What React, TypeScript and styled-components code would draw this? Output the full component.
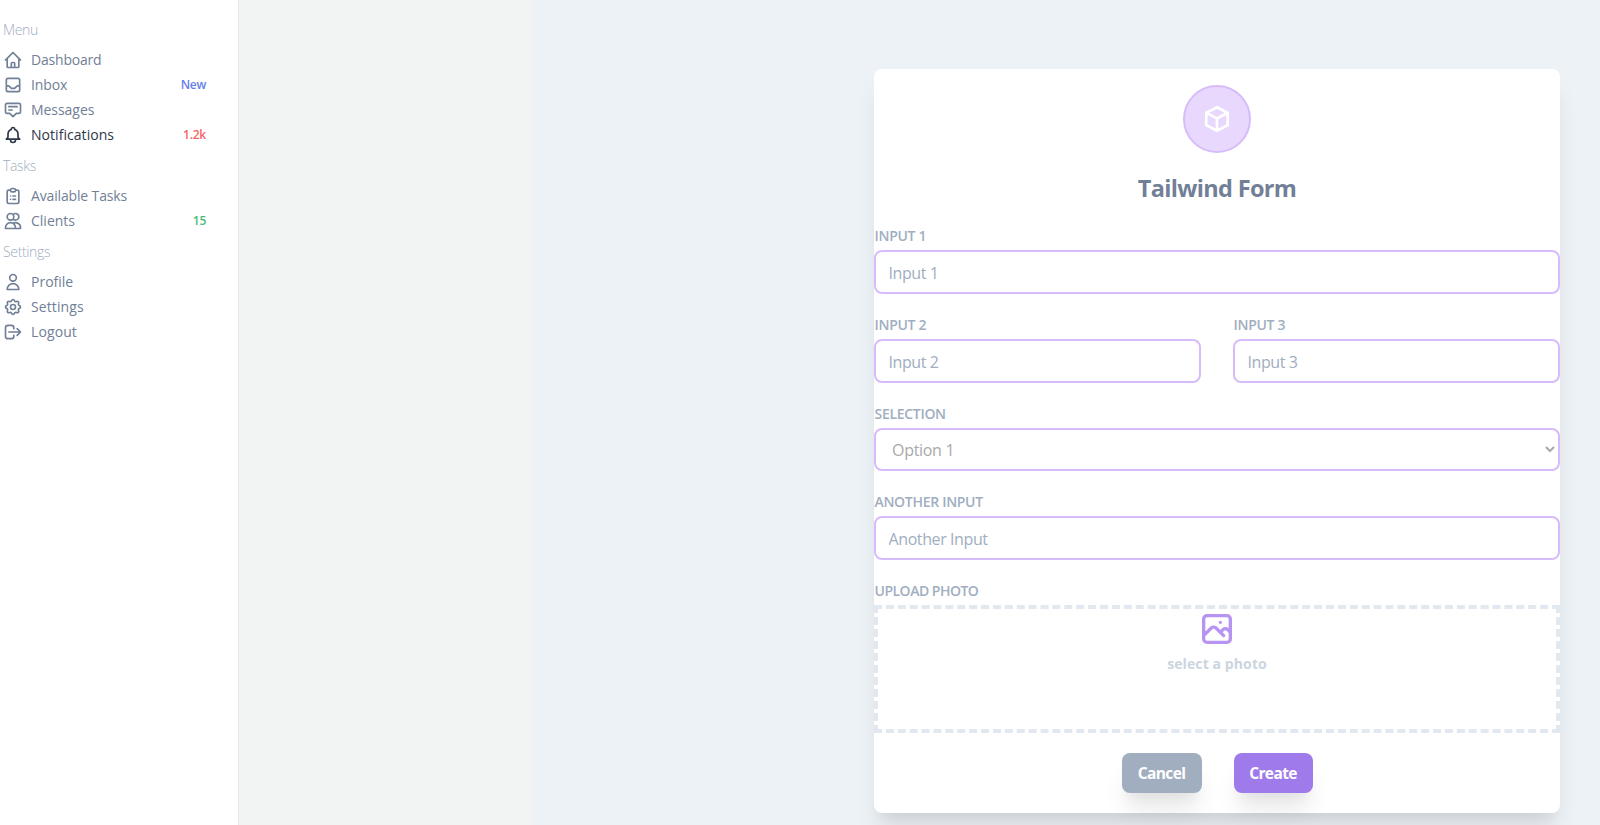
import React from "react";
import styled, { createGlobalStyle } from "styled-components";

const Global = createGlobalStyle`
  *, *::before, *::after { box-sizing: border-box; }
  body { margin: 0; overflow: hidden; font-family: "Open Sans", "Noto Sans", sans-serif; background: #fff; }
  h1, p { margin: 0; }
`;

const Page = styled.div`
  display: flex;
  height: 825px;
  overflow: hidden;
`;

const Sidebar = styled.aside`
  flex: 0 0 239px;
  padding: 18px 32px 0 3px;
  border-right: 1px solid #e2e8f0;
  background: #fff;
`;

const Group = styled.section`
  margin-bottom: 7px;
`;

const GroupTitle = styled.div`
  height: 24px;
  margin-bottom: 5px;
  line-height: 24px;
  font-size: 14px;
  font-weight: 300;
  letter-spacing: -0.35px;
  color: #a0aec0;
`;

const NavItem = styled.a<{ $active?: boolean; $tracking?: number }>`
  display: flex;
  align-items: center;
  height: 25px;
  color: ${(p) => (p.$active ? "#2d3748" : "#718096")};
  font-size: 14px;
  letter-spacing: ${(p) => p.$tracking ?? 0}px;

  svg { width: 20px; height: 20px; margin: 1px 8px 0 0; }
`;

const Badge = styled.span<{ $color: string }>`
  margin-left: auto;
  font-size: 12px;
  font-weight: 600;
  letter-spacing: -0.25px;
  color: ${(p) => p.$color};
`;

const Gutter = styled.div`
  flex: 0 0 293px;
  background: #f1f4f3;
`;

const Content = styled.main`
  flex: 1;
  display: flex;
  justify-content: flex-end;
  align-items: flex-start;
  padding: 69px 40px 0 0;
  background: #edf2f7;
`;

const Card = styled.form`
  width: 686px;
  height: 744px;
  padding-top: 16px;
  display: flex;
  flex-direction: column;
  background: #fff;
  border-radius: 8px;
  box-shadow: 0 20px 25px -5px rgba(0, 0, 0, 0.1), 0 10px 10px -5px rgba(0, 0, 0, 0.04);
`;

const Emblem = styled.div`
  align-self: center;
  display: flex;
  align-items: center;
  justify-content: center;
  width: 68px;
  height: 68px;
  border: 2px solid #d6bcfa;
  border-radius: 50%;
  background: #e9d8fd;
  color: #fff;
`;

const Title = styled.h1`
  margin-top: 17px;
  height: 35px;
  line-height: 36px;
  text-align: center;
  font-size: 23.5px;
  font-weight: 700;
  letter-spacing: -0.65px;
  color: #718096;
`;

const Row = styled.div`
  display: grid;
  grid-auto-flow: column;
  grid-auto-columns: 1fr;
  gap: 32px;
  margin-top: 20px;
`;

const Field = styled.label`
  display: flex;
  flex-direction: column;
`;

const FieldLabel = styled.span<{ $tight?: boolean }>`
  height: 25px;
  padding: 0 0 4px 0.5px;
  line-height: 21px;
  font-size: 14px;
  font-weight: 600;
  letter-spacing: ${(p) => (p.$tight ? -0.5 : -0.3)}px;
  text-transform: uppercase;
  color: #a0aec0;
`;

const Input = styled.input`
  width: 100%;
  height: 44px;
  padding: 9px 12px 8px 12.5px;
  border: 2px solid #d6bcfa;
  border-radius: 8px;
  outline: none;
  background: #fff;
  font: 16px "Open Sans", "Noto Sans", sans-serif;
  letter-spacing: -0.4px;

  &::placeholder { color: #a0aec0; opacity: 1; }
`;

const Select = styled.select`
  width: 100%;
  height: 43px;
  padding: 8px 12px;
  border: 2px solid #d6bcfa;
  border-radius: 8px;
  background: #fff;
  color: #a9a9a9;
  font: 16px "Open Sans", "Noto Sans", sans-serif;
  letter-spacing: -0.3px;
`;

const DropZone = styled.div`
  display: flex;
  flex-direction: column;
  align-items: center;
  height: 128px;
  border: 4px dashed #e2e8f0;
  color: #b794f4;

  svg { width: 40px; height: 40px; }
`;

const DropHint = styled.p`
  padding-top: 4px;
  line-height: 21px;
  font-size: 14px;
  font-weight: 700;
  letter-spacing: 0.1px;
  color: #cbd5e0;
`;

const Actions = styled.div`
  display: flex;
  justify-content: center;
  gap: 32px;
  margin-top: 20px;
`;

const Button = styled.button<{ $bg: string; $width: number }>`
  width: ${(p) => p.$width}px;
  height: 40px;
  padding: 0;
  border: 0;
  border-radius: 8px;
  background: ${(p) => p.$bg};
  color: #fff;
  font: 700 15.5px "Open Sans", "Noto Sans", sans-serif;
  letter-spacing: -0.6px;
  box-shadow: 0 20px 25px -5px rgba(0, 0, 0, 0.1), 0 10px 10px -5px rgba(0, 0, 0, 0.04);
`;

const Icon = ({ d }: { d: string }) => (
  <svg viewBox="0 0 24 24" fill="none" stroke="currentColor" strokeWidth="2" strokeLinecap="round" strokeLinejoin="round">
    <path d={d} />
  </svg>
);

const icons = {
  home: "M3 12l2-2m0 0l7-7 7 7M5 10v10a1 1 0 001 1h3m10-11l2 2m-2-2v10a1 1 0 01-1 1h-3m-6 0a1 1 0 001-1v-4a1 1 0 011-1h2a1 1 0 011 1v4a1 1 0 001 1m-6 0h6",
  inbox: "M20 13V6a2 2 0 00-2-2H6a2 2 0 00-2 2v7m16 0v5a2 2 0 01-2 2H6a2 2 0 01-2-2v-5m16 0h-2.586a1 1 0 00-.707.293l-2.414 2.414a1 1 0 01-.707.293h-3.172a1 1 0 01-.707-.293l-2.414-2.414A1 1 0 006.586 13H4",
  message: "M7 8h10M7 12h4m1 8l-4-4H5a2 2 0 01-2-2V6a2 2 0 012-2h14a2 2 0 012 2v8a2 2 0 01-2 2h-3l-4 4z",
  bell: "M15 17h5l-1.405-1.405A2.032 2.032 0 0118 14.158V11a6.002 6.002 0 00-4-5.659V5a2 2 0 10-4 0v.341C7.67 6.165 6 8.388 6 11v3.159c0 .538-.214 1.055-.595 1.436L4 17h5m6 0v1a3 3 0 11-6 0v-1m6 0H9",
  tasks: "M9 5H7a2 2 0 00-2 2v12a2 2 0 002 2h10a2 2 0 002-2V7a2 2 0 00-2-2h-2M9 5a2 2 0 002 2h2a2 2 0 002-2M9 5a2 2 0 012-2h2a2 2 0 012 2m-3 7h3m-3 4h3m-6-4h.01M9 16h.01",
  users: "M12 4.354a4 4 0 110 5.292M15 21H3v-1a6 6 0 0112 0v1zm0 0h6v-1a6 6 0 00-9-5.197M13 7a4 4 0 11-8 0 4 4 0 018 0z",
  user: "M16 7a4 4 0 11-8 0 4 4 0 018 0zM12 14a7 7 0 00-7 7h14a7 7 0 00-7-7z",
  gear: "M10.325 4.317c.426-1.756 2.924-1.756 3.35 0a1.724 1.724 0 002.573 1.066c1.543-.94 3.31.826 2.37 2.37a1.724 1.724 0 001.065 2.572c1.756.426 1.756 2.924 0 3.35a1.724 1.724 0 00-1.066 2.573c.94 1.543-.826 3.31-2.37 2.37a1.724 1.724 0 00-2.572 1.065c-.426 1.756-2.924 1.756-3.35 0a1.724 1.724 0 00-2.573-1.066c-1.543.94-3.31-.826-2.37-2.37a1.724 1.724 0 00-1.065-2.572c-1.756-.426-1.756-2.924 0-3.35a1.724 1.724 0 001.066-2.573c-.94-1.543.826-3.31 2.37-2.37.996.608 2.296.07 2.572-1.065z M15 12a3 3 0 11-6 0 3 3 0 016 0z",
  logout: "M17 16l4-4m0 0l-4-4m4 4H7m6 4v1a3 3 0 01-3 3H6a3 3 0 01-3-3V7a3 3 0 013-3h4a3 3 0 013 3v1",
  photo: "M4 16l4.586-4.586a2 2 0 012.828 0L16 16m-2-2l1.586-1.586a2 2 0 012.828 0L20 14m-6-6h.01M6 20h12a2 2 0 002-2V6a2 2 0 00-2-2H6a2 2 0 00-2 2v12a2 2 0 002 2z",
};

type Item = {
  icon: keyof typeof icons;
  label: string;
  badge?: string;
  color?: string;
  active?: boolean;
  tracking?: number;
};

const groups: { title: string; items: Item[] }[] = [
  {
    title: "Menu",
    items: [
      { icon: "home", label: "Dashboard", tracking: -0.2 },
      { icon: "inbox", label: "Inbox", badge: "New", color: "#667eea", tracking: -0.1 },
      { icon: "message", label: "Messages", tracking: -0.05 },
      { icon: "bell", label: "Notifications", badge: "1.2k", color: "#f56565", active: true, tracking: 0.05 },
    ],
  },
  {
    title: "Tasks",
    items: [
      { icon: "tasks", label: "Available Tasks", tracking: -0.15 },
      { icon: "users", label: "Clients", badge: "15", color: "#48bb78" },
    ],
  },
  {
    title: "Settings",
    items: [
      { icon: "user", label: "Profile" },
      { icon: "gear", label: "Settings", tracking: 0.1 },
      { icon: "logout", label: "Logout", tracking: 0.1 },
    ],
  },
];

const TextField = ({ name }: { name: string }) => (
  <Field>
    <FieldLabel>{name}</FieldLabel>
    <Input placeholder={name} />
  </Field>
);

export default function App() {
  return (
    <Page>
      <Global />
      <Sidebar>
        {groups.map((g) => (
          <Group key={g.title}>
            <GroupTitle>{g.title}</GroupTitle>
            {g.items.map((i) => (
              <NavItem key={i.label} $active={i.active} $tracking={i.tracking}>
                <Icon d={icons[i.icon]} />
                {i.label}
                {i.badge && <Badge $color={i.color!}>{i.badge}</Badge>}
              </NavItem>
            ))}
          </Group>
        ))}
      </Sidebar>
      <Gutter />
      <Content>
        <Card>
          <Emblem>
            <svg width="32" height="32" viewBox="0 0 32 32" fill="none" stroke="currentColor" strokeWidth="2.7">
              <path d="M16 4.2L26.7 9.8V22.2L16 27.8L5.3 22.2V9.8ZM5.3 9.8L16 15.4L26.7 9.8M16 15.4V27.8" />
            </svg>
          </Emblem>
          <Title>Tailwind Form</Title>
          <Row><TextField name="Input 1" /></Row>
          <Row><TextField name="Input 2" /><TextField name="Input 3" /></Row>
          <Row>
            <Field>
              <FieldLabel>Selection</FieldLabel>
              <Select><option>Option 1</option></Select>
            </Field>
          </Row>
          <Row><TextField name="Another Input" /></Row>
          <Row>
            <Field as="div">
              <FieldLabel $tight>Upload Photo</FieldLabel>
              <DropZone>
                <Icon d={icons.photo} />
                <DropHint>select a photo</DropHint>
              </DropZone>
            </Field>
          </Row>
          <Actions>
            <Button type="button" $bg="#a0aec0" $width={80}>Cancel</Button>
            <Button type="button" $bg="#9f7aea" $width={79}>Create</Button>
          </Actions>
        </Card>
      </Content>
    </Page>
  );
}
